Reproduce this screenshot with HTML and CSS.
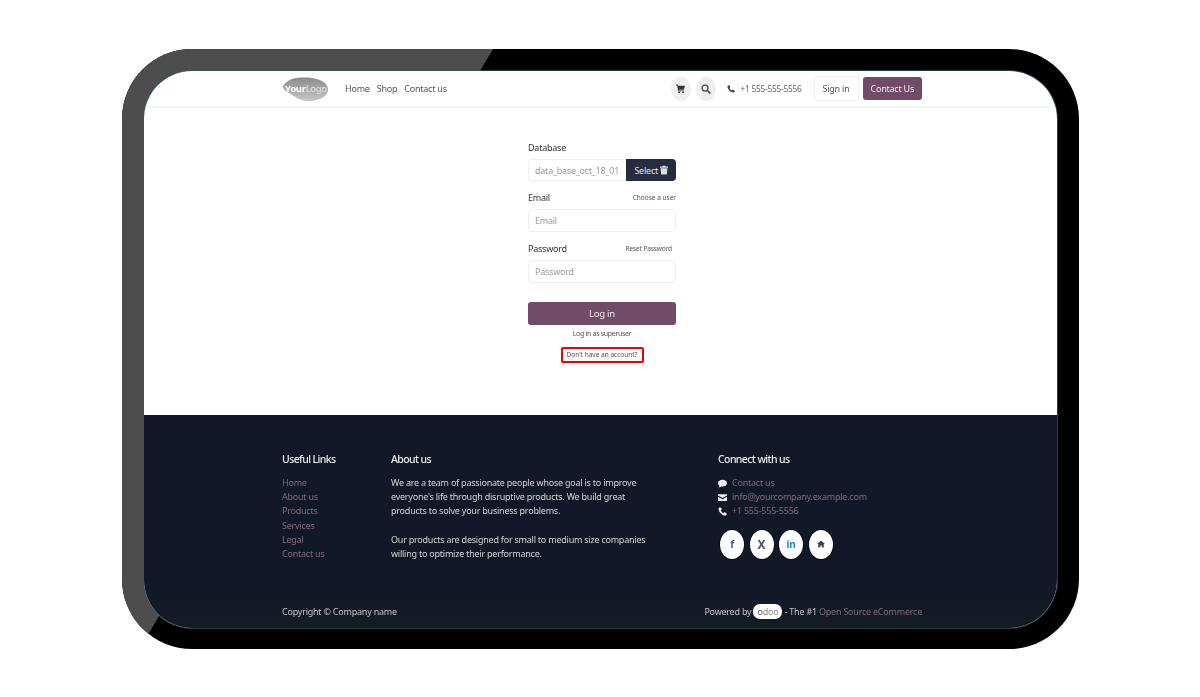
FILE: index.html
```html
<!DOCTYPE html>
<html lang="en">
<head>
  <meta charset="UTF-8" />
  <title>Odoo login</title>
  <link rel="stylesheet" href="styles.css">
</head>
<body>
<div class="frame">
  <div class="screen">
    <header class="topbar">
      <svg class="logo" viewBox="0 0 47 24" width="47" height="24">
        <defs>
          <linearGradient id="logoFill" x1="0" y1="0" x2="0" y2="1">
            <stop offset="0" stop-color="#8c8c8c"/>
            <stop offset="1" stop-color="#c6c6c6"/>
          </linearGradient>
        </defs>
        <path d="M1 9C3 6 8 1 18 .5C30 0 44 2 46 11C47 19 38 24 27 24C17 24 12 19 7 16C4 14 0 12 1 9Z" fill="url(#logoFill)"/>
        <text x="3" y="15" class="logo-text"><tspan class="logo-your">Your</tspan><tspan class="logo-logo">Logo</tspan></text>
      </svg>
      <nav class="topnav">
        <a>Home</a>
        <a>Shop</a>
        <a>Contact us</a>
      </nav>
      <span class="round-btn">
        <svg viewBox="0 0 16 16" width="9" height="9"><path d="M0 1h3l.5 2H16l-2 7H5l.3 1.500H14V13H4L2 2.500H0z" fill="#333"/><circle cx="5.500" cy="14.500" r="1.500" fill="#333"/><circle cx="12.500" cy="14.500" r="1.500" fill="#333"/></svg>
      </span>
      <span class="round-btn search-btn">
        <svg viewBox="0 0 16 16" width="10" height="10"><circle cx="6.500" cy="6.500" r="4.800" fill="none" stroke="#444" stroke-width="2"/><path d="M10 10l5 5" stroke="#444" stroke-width="2.400"/></svg>
      </span>
      <span class="top-phone">
        <svg viewBox="0 0 16 16" width="8" height="8"><path d="M3.500 0L1 2C0 8 8 16 14 15l2-2.500L12 9l-2.500 2C7.500 10 6 8 5 6l2-2.500z" fill="#444"/></svg>
        +1 555-555-5556
      </span>
      <a class="btn-signin">Sign in</a>
      <a class="btn-contact">Contact Us</a>
    </header>

    <main class="content">
      <form class="login">
        <div class="label-row"><label>Database</label></div>
        <div class="db-group">
          <input class="field db-field" placeholder="data_base_oct_18_01" disabled>
          <a class="btn-select">Select
            <svg viewBox="0 0 14 16" width="8" height="10"><path d="M0 2h4.500V.5h5V2H14v2H0zM1 5h12l-1 11H2z" fill="#ddd"/></svg>
          </a>
        </div>
        <div class="label-row"><label>Email</label><a class="small-link">Choose a user</a></div>
        <input class="field" placeholder="Email">
        <div class="label-row"><label>Password</label><a class="small-link reset-link">Reset Password</a></div>
        <input class="field" placeholder="Password">
        <button type="button" class="btn-login">Log in</button>
        <a class="superuser">Log in as superuser</a>
        <a class="signup">Don't have an account?</a>
      </form>
    </main>

    <footer class="footer">
      <div class="footer-cols">
        <div>
          <h5>Useful Links</h5>
          <ul class="footer-links">
            <li>Home</li>
            <li>About us</li>
            <li>Products</li>
            <li>Services</li>
            <li>Legal</li>
            <li>Contact us</li>
          </ul>
        </div>
        <div>
          <h5>About us</h5>
          <p class="about">We are a team of passionate people whose goal is to improve everyone's life through disruptive products. We build great products to solve your business problems.</p>
          <p class="about">Our products are designed for small to medium size companies willing to optimize their performance.</p>
        </div>
        <div>
          <h5>Connect with us</h5>
          <ul class="footer-links contact-list">
            <li><svg viewBox="0 0 16 16" width="9" height="9"><path d="M8 1.500c4.400 0 8 2.600 8 6s-3.600 6-8 6c-.8 0-1.500-.1-2.200-.2C4.500 14.500 2.500 15 1 15c1-1 1.600-2.200 1.700-3.200C1 10.700 0 9.200 0 7.500c0-3.400 3.600-6 8-6z" fill="#eee"/></svg>Contact us</li>
            <li><svg viewBox="0 0 16 16" width="9" height="9"><path d="M0 2h16v2.500L8 9 0 4.500zM0 6.500L8 11l8-4.500V14H0z" fill="#eee"/></svg>info@yourcompany.example.com</li>
            <li><svg viewBox="0 0 16 16" width="9" height="9"><path d="M3.500 0L1 2C0 8 8 16 14 15l2-2.500L12 9l-2.500 2C7.500 10 6 8 5 6l2-2.500z" fill="#eee"/></svg>+1 555-555-5556</li>
          </ul>
          <div class="socials">
            <span class="social fb">f</span>
            <span class="social tw">X</span>
            <span class="social li">in</span>
            <span class="social">
              <svg viewBox="0 0 16 16" width="8" height="8"><path d="M8 1L0 8h2.500v7h4v-4h3v4h4V8H16z" fill="#444"/></svg>
            </span>
          </div>
        </div>
      </div>
      <div class="copyright">
        <span>Copyright © Company name</span>
        <span class="powered">Powered by <span class="odoo-pill"><b>o</b>doo</span> - The #1 <a>Open Source eCommerce</a></span>
      </div>
    </footer>
  </div>
</div>
</body>
</html>
```

FILE: styles.css
```css
html, body {
  margin: 0;
  background: #fff;
}
body {
  font-family: "Noto Sans", sans-serif;
  font-size: 9px;
  letter-spacing: -.23px;
  color: #333;
}
.frame {
  position: relative;
  box-sizing: border-box;
  width: 957px;
  height: 600px;
  margin: 49px 0 0 122px;
  padding: 22px 22px 21px;
  background: #000;
  border-radius: 70px;
  overflow: hidden;
}
/* grey diagonal band over the black frame */
.frame::before {
  content: "";
  position: absolute;
  inset: 0;
  background: #4d4d4d;
  clip-path: polygon(0 0, 371px 0, 27px 584px, 0 600px);
}
.screen {
  position: relative;
  display: flex;
  flex-direction: column;
  height: 100%;
  background: #fff;
  border-radius: 48px;
  overflow: hidden;
  box-shadow: 0 0 0 1px rgba(47, 90, 102, .7);
  filter: blur(.55px);
}

/* top bar */
.topbar {
  display: flex;
  align-items: center;
  box-sizing: border-box;
  height: 37px;
  padding: 0 135px 0 138px;
  border-bottom: 2px solid #f4f4f4;
  flex: none;
}
.logo {
  flex: none;
}
.logo-text {
  font-size: 9.500px;
  letter-spacing: -.3px;
}
.logo-your {
  font-weight: 700;
  fill: #fff;
}
.logo-logo {
  fill: #e2e2e2;
}
.topnav {
  display: flex;
  gap: 7px;
  margin-left: 16px;
  margin-right: auto;
  color: #555;
}
.round-btn {
  display: flex;
  align-items: center;
  justify-content: center;
  width: 20px;
  height: 24px;
  border-radius: 50%;
  background: #efefef;
}
.search-btn {
  margin-left: 5px;
}
.top-phone {
  display: flex;
  align-items: center;
  gap: 6px;
  margin: 0 12px 0 11px;
  font-size: 8.300px;
  color: #666;
}
.btn-signin {
  padding: 5px 8px;
  border: 1px solid #eee;
  border-radius: 3px;
  color: #555;
}
.btn-contact {
  margin-left: 4px;
  padding: 5px 8px;
  background: #714b67;
  border-radius: 3px;
  color: #eee;
}

/* login */
.content {
  flex: 1;
  display: flex;
  justify-content: center;
  padding-left: 3px;
}
.login {
  display: flex;
  flex-direction: column;
  width: 148px;
  padding-top: 32px;
}
.label-row {
  display: flex;
  justify-content: space-between;
  align-items: center;
  height: 14px;
  margin-bottom: 5px;
}
label {
  color: #333;
}
.small-link {
  font-size: 6.500px;
  letter-spacing: 0;
  color: #5f4a5a;
}
.reset-link {
  margin-right: 4px;
  letter-spacing: -.1px;
}
.field {
  box-sizing: border-box;
  width: 100%;
  height: 23px;
  margin: 0 0 9px;
  padding: 0 6px;
  border: 1px solid #eee;
  border-radius: 4px;
  background: #fff;
  font: 9px "Noto Sans", sans-serif;
  letter-spacing: -.23px;
}
.field::placeholder {
  color: #999;
}
.db-group {
  display: flex;
  height: 22px;
  margin-bottom: 9px;
}
.db-field {
  flex: 1;
  width: auto;
  height: 22px;
  min-width: 0;
  margin: 0;
  border-right: 0;
  border-radius: 4px 0 0 4px;
}
.btn-select {
  display: flex;
  align-items: center;
  gap: 2px;
  padding: 0 8px;
  background: #242d42;
  border-radius: 0 4px 4px 0;
  color: #e6e6e6;
}
.btn-login {
  height: 23px;
  margin-top: 10px;
  border: 0;
  border-radius: 3px;
  background: #714b67;
  color: #eee;
  font: 9.500px "Noto Sans", sans-serif;
  letter-spacing: -.23px;
}
.superuser {
  margin-top: 4px;
  text-align: center;
  font-size: 7px;
  letter-spacing: -.3px;
  color: #5f4a5a;
}
.signup {
  align-self: center;
  box-sizing: border-box;
  width: 83px;
  height: 16px;
  margin-top: 9px;
  border: 2px solid #f00000;
  border-radius: 2px;
  line-height: 12px;
  text-align: center;
  font-size: 6.500px;
  letter-spacing: 0;
  color: #5f4a5a;
}

/* footer */
.footer {
  flex: none;
  height: 213px;
  box-sizing: border-box;
  padding: 37px 135px 0 138px;
  display: flex;
  flex-direction: column;
  background: linear-gradient(#111928 82%, #131b23);
  color: #ddd;
}
.footer-cols {
  display: grid;
  grid-template-columns: 109px 327px 1fr;
  height: 152px;
}
h5 {
  margin: 0 0 10px;
  font-size: 10.500px;
  font-weight: 500;
  line-height: 14px;
  letter-spacing: -.6px;
  color: #eee;
}
.footer-links {
  list-style: none;
  margin: 0;
  padding: 0;
  line-height: 14.200px;
  color: #806a7a;
}
.contact-list li {
  display: flex;
  align-items: center;
  gap: 5px;
}
.about {
  width: 262px;
  margin: 0 0 14px;
  line-height: 14.200px;
  color: #d4d4d4;
}
.socials {
  display: flex;
  gap: 5.500px;
  margin: 11px 0 0 2px;
}
.social {
  display: flex;
  align-items: center;
  justify-content: center;
  width: 24px;
  height: 29px;
  border-radius: 50%;
  background: #fff;
  box-shadow: 0 0 0 1px #0a0d15;
  font-size: 10px;
  font-weight: 700;
  color: #555;
}
.fb {
  color: #3b5998;
}
.tw {
  font-size: 12px;
}
.li {
  color: #1d87bd;
}
.copyright {
  display: flex;
  justify-content: space-between;
  align-items: center;
  color: #c4c4c4;
}
.powered a {
  color: #806a7a;
}
.odoo-pill {
  display: inline-block;
  padding: 0 4px;
  border-radius: 7px;
  background: #fff;
  color: #888;
  font-size: 9px;
  line-height: 15px;
}
.odoo-pill b {
  font-weight: 400;
  color: #714b67;
}
```
